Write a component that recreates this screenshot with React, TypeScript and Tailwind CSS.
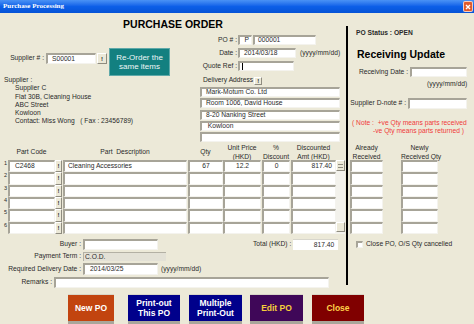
import React from 'react';

// classic VB-style 3D borders
const SUNKEN =
    'bg-white border-t-2 border-l-2 border-b border-r border-t-[#a7a498] border-l-[#a7a498] border-b-[#f4f3ee] border-r-[#f4f3ee]';
const RAISED =
    'bg-[#ece9d8] border-t border-l border-b border-r border-t-white border-l-white border-b-[#8f8c80] border-r-[#8f8c80]';

type Row = { code?: string; desc?: string; qty?: string; price?: string; disc?: string; amt?: string };

const ROWS: Row[] = [
    { code: 'C2468', desc: 'Cleaning Accessories', qty: '67', price: '12.2', disc: '0', amt: '817.40' },
    {},
    {},
    {},
    {},
    {},
];

const ADDRESS = ['Mark-Motum Co. Ltd', 'Room 1006, David House', '8-20 Nanking Street', '\u00a0Kowloon', ''];

const SUPPLIER = ['Supplier C', 'Flat 30B, Cleaning House', 'ABC Street', 'Kowloon', 'Contact: Miss Wong   ( Fax : 23456789)'];

const BangButton: React.FC<{ className?: string }> = ({ className = '' }) => (
    <div className={`${RAISED} flex items-center justify-center text-[6px] font-bold leading-none ${className}`}>!</div>
);

const TitleBar: React.FC = () => (
    <div className="h-[13px] flex items-center justify-between pl-[3px] pr-[1px] bg-linear-to-b from-[#4a92f5] via-[#0c5fe8] to-[#0653d6]">
        <span className="font-['Liberation_Serif',serif] font-bold text-white text-[7px] leading-none">
            Purchase Processing
        </span>
        <div className="w-[10px] h-[11px] rounded-[2px] border border-white/70 bg-[#e05a2d] flex items-center justify-center">
            <svg width="6" height="6" viewBox="0 0 6 6">
                <path d="M1 1 L5 5 M5 1 L1 5" stroke="white" strokeWidth="1.4" />
            </svg>
        </div>
    </div>
);

const LeftUpper: React.FC = () => (
    <div className="flex flex-col h-[132px]">
        {/* Title */}
        <div className="pt-[5px] h-[17px] text-center font-bold text-[10.5px] leading-[12px] text-black">
            PURCHASE ORDER
        </div>

        <div className="flex h-[115px]">
            {/* Supplier side */}
            <div className="w-[200px] flex flex-col">
                <div className="flex items-start mt-[18px]">
                    <div className="w-[45px] h-[11px] mt-[5px] flex items-center justify-end pr-[1px]">Supplier # :</div>
                    <div className={`${SUNKEN} w-[50px] h-[11px] mt-[5px] ml-[1px] pl-[4px] flex items-center`}>S00001</div>
                    <BangButton className="w-[10px] h-[11px] mt-[5px] ml-[1px]" />
                    <div className="w-[61px] h-[28px] ml-[2px] bg-[#138080] border border-[#5fa9a9] text-[#eef7f7] text-[8px] leading-[9.3px] flex flex-col items-center justify-center">
                        <span>Re-Order the</span>
                        <span>same items</span>
                    </div>
                </div>
                <div className="flex flex-col leading-[8.3px]">
                    <span className="pl-[4px]">Supplier :</span>
                    {SUPPLIER.map((line) => (
                        <span key={line} className="pl-[15px] whitespace-pre">
                            {line}
                        </span>
                    ))}
                </div>
            </div>

            {/* PO details + delivery */}
            <div className="w-[146px] flex flex-col">
                <div className="flex h-[10px] mt-[5px]">
                    <div className="w-[38px] flex items-center justify-end pr-[1px]">PO # :</div>
                    <div className={`${SUNKEN} w-[14px] flex items-center justify-end pr-[2px]`}>P</div>
                    <div className={`${SUNKEN} w-[63px] ml-[1px] pl-[3px] flex items-center`}>000001</div>
                </div>
                <div className="flex h-[10px] mt-[3px]">
                    <div className="w-[38px] flex items-center justify-end pr-[1px]">Date :</div>
                    <div className={`${SUNKEN} w-[58px] pl-[4px] flex items-center`}>2014/03/18</div>
                    <div className="ml-[4px] flex items-center">(yyyy/mm/dd)</div>
                </div>
                <div className="flex h-[10px] mt-[3px]">
                    <div className="w-[38px] flex items-center justify-end pr-[1px]">Quote Ref :</div>
                    <div className={`${SUNKEN} w-[56px] pl-[2px] flex items-center`}>
                        <div className="w-px h-[7px] bg-black" />
                    </div>
                </div>
                <div className="flex h-[9px] mt-[5px] items-center">
                    <span className="pl-[3px]">Delivery Address</span>
                    <BangButton className="w-[8px] h-[8px] ml-[1px]" />
                </div>
                <div className="flex flex-col gap-[1.25px] mt-[2px]">
                    {ADDRESS.map((line, i) => (
                        <div key={i} className={`${SUNKEN} w-[140px] h-[10px] pl-[4px] flex items-center whitespace-pre`}>
                            {line}
                        </div>
                    ))}
                </div>
            </div>
        </div>
    </div>
);

const LeftTable: React.FC = () => (
    <div className="flex flex-col">
        <div className="flex h-[15px] items-center text-center leading-[8.5px] whitespace-nowrap">
            <div className="w-[8px]" />
            <div className="w-[47px]">Part Code</div>
            <div className="w-[7px]" />
            <div className="w-[124px] ml-[1px]">Part&nbsp; Description</div>
            <div className="w-[35px] ml-[1px]">Qty</div>
            <div className="w-[38px]">
                Unit Price
                <br />
                (HKD)
            </div>
            <div className="w-[28px] ml-[1px]">
                %<br />
                Discount
            </div>
            <div className="w-[45px] ml-[1px]">
                Discounted
                <br />
                Amt (HKD)
            </div>
        </div>
        <div className="flex h-[74px]">
            <div className="flex flex-col">
                {ROWS.map((r, i) => (
                    <div key={i} className="flex flex-1">
                        <div className="w-[8px] pl-[4px] text-[5.5px] leading-[6px]">{i + 1}</div>
                        <div className={`${SUNKEN} w-[47px] pl-[5px] flex items-center`}>{r.code}</div>
                        <BangButton className="w-[7px] text-[5px]" />
                        <div className={`${SUNKEN} w-[124px] ml-[1px] pl-[3px] flex items-center`}>{r.desc}</div>
                        <div className={`${SUNKEN} w-[35px] ml-[1px] flex items-center justify-center`}>{r.qty}</div>
                        <div className={`${SUNKEN} w-[38px] flex items-center justify-center`}>{r.price}</div>
                        <div className={`${SUNKEN} w-[28px] ml-[1px] flex items-center justify-center`}>{r.disc}</div>
                        <div className={`${SUNKEN} w-[45px] ml-[1px] pr-[3px] flex items-center justify-end`}>{r.amt}</div>
                    </div>
                ))}
            </div>
            {/* scrollbar */}
            <div className="w-[9px] flex flex-col bg-[#f3f2ec]">
                <div className={`${RAISED} h-[11px] flex flex-col items-center justify-center gap-[2px]`}>
                    <div className="w-[5px] h-px bg-[#8f8c80]" />
                    <div className="w-[5px] h-px bg-[#8f8c80]" />
                </div>
                <div className="flex-1" />
                <div className={`${RAISED} h-[10px] mb-[2px]`} />
            </div>
        </div>
    </div>
);

const LeftLower: React.FC = () => (
    <div className="flex flex-col">
        <div className="flex h-[11px] mt-[5px]">
            <div className="w-[82px] flex items-center justify-end pr-[1px]">Buyer :</div>
            <div className={`${SUNKEN} w-[75px] ml-[1px]`} />
            <div className="ml-[95px] flex items-center">Total (HKD) :</div>
            <div className="w-[45px] ml-[2px] bg-white border-t border-t-[#d8d6cc] pr-[4px] flex items-center justify-end">
                817.40
            </div>
        </div>
        <div className="flex h-[9px] mt-[2px]">
            <div className="w-[82px] flex items-center justify-end pr-[1px]">Payment Term :</div>
            <div className="w-[83px] ml-[1px] pl-[1px] bg-[#e3e1d6] border-t border-l border-t-[#b3b0a4] border-l-[#b3b0a4] flex items-center">
                C.O.D.
            </div>
        </div>
        <div className="flex h-[12px] mt-[2px]">
            <div className="w-[82px] flex items-center justify-end pr-[1px]">Required Delivery Date :</div>
            <div className={`${SUNKEN} w-[75px] ml-[1px] pl-[5px] flex items-center`}>2014/03/25</div>
            <div className="ml-[3px] flex items-center">(yyyy/mm/dd)</div>
        </div>
        <div className="flex h-[11px] mt-[2px]">
            <div className="w-[53px] flex items-center justify-end pr-[1px]">Remarks :</div>
            <div className={`${SUNKEN} w-[275px] ml-[1px]`} />
        </div>
    </div>
);

const RightPanel: React.FC = () => (
    <div className="w-[126px] flex flex-col">
        <div className="flex flex-col h-[132px]">
            <div className="mt-[16px] pl-[8px] leading-[8px] font-bold">PO Status : OPEN</div>
            <div className="mt-[11px] pl-[9px] leading-[12px] font-bold text-[10.5px] text-black">Receiving Update</div>
            <div className="flex h-[10px] mt-[7px]">
                <div className="w-[61px] flex items-center justify-end pr-[1px]">Receiving Date :</div>
                <div className={`${SUNKEN} w-[57px] ml-[1px]`} />
            </div>
            <div className="mt-[3px] pl-[79px] leading-[8px]">(yyyy/mm/dd)</div>
            <div className="flex h-[11px] mt-[10px]">
                <div className="w-[59px] flex items-center justify-end pr-[1px]">Supplier D-note # :</div>
                <div className={`${SUNKEN} w-[59px] ml-[1px]`} />
            </div>
            <div className="mt-[10px] flex flex-col leading-[8px] text-[#f03a3a] whitespace-pre">
                <span className="pl-[4px]">( Note :  +ve Qty means parts received</span>
                <span className="pl-[25px]">-ve Qty means parts returned )</span>
            </div>
        </div>

        <div className="flex h-[15px] items-center text-center leading-[8.5px] pl-[2px] whitespace-nowrap">
            <div className="w-[33px]">
                Already
                <br />
                Received
            </div>
            <div className="w-[37px] ml-[18px]">
                Newly
                <br />
                Received Qty
            </div>
        </div>
        <div className="flex flex-col h-[74px] pl-[2px]">
            {ROWS.map((_, i) => (
                <div key={i} className="flex flex-1">
                    <div className={`${SUNKEN} w-[33px]`} />
                    <div className={`${SUNKEN} w-[37px] ml-[18px]`} />
                </div>
            ))}
        </div>

        <div className="flex items-center h-[8px] mt-[6px] pl-[8px]">
            <div className={`${SUNKEN} w-[7px] h-[7px]`} />
            <span className="ml-[3px]">Close PO, O/S Qty cancelled</span>
        </div>
    </div>
);

const BUTTONS = [
    { label: ['New PO'], cls: 'w-[46px] bg-[#c2440f] text-white', ml: '' },
    { label: ['Print-out', 'This PO'], cls: 'w-[52px] bg-[#00008b] text-white', ml: 'ml-[14px]' },
    { label: ['Multiple', 'Print-Out'], cls: 'w-[53px] bg-[#00008b] text-white', ml: 'ml-[9px]' },
    { label: ['Edit PO'], cls: 'w-[53px] bg-[#3f0758] text-[#f5cf3a]', ml: 'ml-[8px]' },
    { label: ['Close'], cls: 'w-[52px] bg-[#800000] text-[#ffd24a]', ml: 'ml-[9px]' },
];

const App: React.FC = () => {
    return (
        <div className="w-[474px] h-[324px] overflow-hidden bg-[#ece9d8] text-[#2a2a2a] text-[6.7px] leading-none font-['Liberation_Sans',Arial,sans-serif]">
            <TitleBar />

            <div className="flex h-[281px]">
                <div className="w-[346px] flex flex-col">
                    <LeftUpper />
                    <LeftTable />
                    <LeftLower />
                </div>
                <div className="w-[2px] mt-[13px] h-[259px] bg-black" />
                <RightPanel />
            </div>

            {/* Action buttons */}
            <div className="flex pl-[68px]">
                {BUTTONS.map((b) => (
                    <div
                        key={b.label.join(' ')}
                        className={`${b.cls} ${b.ml} h-[30px] border-b-[3px] border-b-[#a9a69b] border-t border-t-[#d9d6c8] flex flex-col items-center justify-center font-bold text-[8.5px] leading-[10px]`}
                    >
                        {b.label.map((l) => (
                            <span key={l}>{l}</span>
                        ))}
                    </div>
                ))}
            </div>
        </div>
    );
};

export default App;
